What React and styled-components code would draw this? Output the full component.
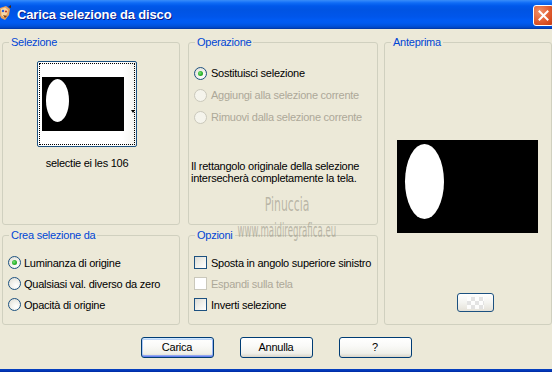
import React from "react";
import styled, { createGlobalStyle, css } from "styled-components";

const GlobalStyle = createGlobalStyle`
  html, body { margin: 0; padding: 0; background: #ECE9D8; }
  body { font-family: "Liberation Sans", Arial, sans-serif; font-size: 11px; color: #000; letter-spacing: -0.25px; }
  * { box-sizing: border-box; }
`;

const Window = styled.div`
  position: relative;
  width: 552px;
  height: 372px;
  background: #ECE9D8;
  display: flex;
  flex-direction: column;
  overflow: hidden;
`;

const TitleBar = styled.div`
  height: 29px;
  flex: none;
  display: flex;
  align-items: center;
  background: linear-gradient(to bottom, #3A8DF6 0px, #2A82FA 1px, #0E6BF5 3px, #0058EA 6px, #0054E3 10px, #0056EB 17px, #005BF3 20px, #005AF0 23px, #0051DA 26px, #0043C0 28px, #003298 29px);
  overflow: hidden;
`;

const AppIcon = styled.svg`
  width: 12px;
  height: 17px;
  margin-left: -1px;
  margin-top: -2px;
  flex: none;
`;

const Title = styled.div`
  margin-left: 6px;
  flex: 1;
  font-family: "Liberation Sans", Arial, sans-serif;
  font-weight: bold;
  font-size: 13px;
  color: #fff;
  text-shadow: 1px 1px 0 #0A1883;
  letter-spacing: -0.15px;
`;

const CloseButton = styled.div`
  width: 21px;
  height: 21px;
  margin-right: -2px;
  margin-top: 1px;
  flex: none;
  border: 1px solid #fff;
  border-radius: 3px;
  background: radial-gradient(circle at 30% 30%, #F0916A 0%, #E6693E 40%, #D2461A 80%, #C23A10 100%);
  display: flex;
  align-items: center;
  justify-content: center;
`;

const Body = styled.div`
  flex: 1;
  display: flex;
  flex-direction: column;
  padding-top: 6px;
`;

const Groups = styled.div`
  display: grid;
  grid-template-columns: 178px 192px 168px;
  grid-template-rows: 190px 97px;
  column-gap: 6px;
  row-gap: 3px;
  padding-left: 2px;
`;

const Group = styled.fieldset`
  margin: 0;
  margin-left: ${(p) => p.$shift || 0}px;
  padding: 0 0 0 ${(p) => p.$pad || 0}px;
  border: 1px solid #D0D0BF;
  border-radius: 3px;
  min-width: 0;
  grid-column: ${(p) => p.$col};
  grid-row: ${(p) => p.$row};
  display: flex;
  flex-direction: column;
  align-items: ${(p) => (p.$center ? "center" : "stretch")};
`;

const Legend = styled.legend`
  color: #0046D5;
  font-size: 11px;
  line-height: 14px;
  padding: 0 2px;
  margin-left: ${(p) => 6 - (p.$pad || 0)}px;
`;

/* Selezione */
const ThumbBox = styled.div`
  margin-top: 12px;
  margin-right: 8px;
  width: 100px;
  height: 86px;
  border: 1px solid #1C5180;
  border-radius: 2px;
  background: linear-gradient(to right, #FFFFFF 0%, #FFFFFF 86%, #F2F2EE 100%);
  outline: 1px dotted #000;
  outline-offset: -3px;
  display: flex;
  align-items: flex-start;
  padding: 15px 0 0 4px;
`;

const DropArrow = styled.div`
  align-self: center;
  margin-left: 7px;
  margin-top: -1px;
  width: 0;
  height: 0;
  border-left: 2.5px solid transparent;
  border-right: 2.5px solid transparent;
  border-top: 3px solid #000;
`;

const Caption = styled.div`
  margin-top: 10px;
  margin-right: 8px;
  line-height: 13px;
`;

/* Radios & checks */
const OptionList = styled.div`
  display: flex;
  flex-direction: column;
  margin-top: ${(p) => p.$top}px;
`;

const OptionRow = styled.div`
  height: ${(p) => p.$h}px;
  display: flex;
  align-items: center;
  gap: ${(p) => p.$gap}px;
  color: ${(p) => (p.$disabled ? "#ACA899" : "#000")};
  white-space: nowrap;
`;

const Radio = styled.span`
  flex: none;
  width: 13px;
  height: 13px;
  border-radius: 50%;
  display: flex;
  align-items: center;
  justify-content: center;
  ${(p) =>
    p.$disabled
      ? css`
          border: 1px solid #CAC8BB;
          background: #F5F4EC;
        `
      : css`
          border: 1px solid #1C5180;
          background: radial-gradient(circle at 65% 70%, #FFFFFF 0%, #F4F3EE 40%, #DCDBD2 100%);
        `}
  &::after {
    content: "";
    display: ${(p) => (p.$checked ? "block" : "none")};
    width: 5px;
    height: 5px;
    border-radius: 50%;
    background: radial-gradient(circle at 40% 40%, #7BE37B 0%, #2DB52D 50%, #1D8E1D 100%);
  }
`;

const Check = styled.span`
  flex: none;
  width: 13px;
  height: 13px;
  ${(p) =>
    p.$disabled
      ? css`
          border: 1px solid #CAC8BB;
          background: #FFFFFF;
        `
      : css`
          border: 1px solid #1C5180;
          background: linear-gradient(135deg, #DCDCD7 0%, #F0F0EA 50%, #FFFFFF 100%);
        `}
`;

const Note = styled.p`
  margin: 32px 0 0 -3px;
  line-height: 12px;
`;

/* Anteprima */
const Preview = styled.div`
  margin-top: 91px;
  margin-left: -2px;
  width: 141px;
  height: 93px;
  background: #000;
  display: flex;
`;

const SwatchButton = styled.div`
  margin-top: 60px;
  margin-left: 14px;
  width: 37px;
  height: 19px;
  border: 1px solid #1C5180;
  border-radius: 3px;
  background: linear-gradient(to bottom, #FFFFFF 0%, #F4F4F0 50%, #E4E1D8 100%);
  display: flex;
  align-items: center;
  justify-content: center;
`;

const Checker = styled.div`
  width: 17px;
  height: 12px;
  background-color: #FFFFFF;
  background-image: conic-gradient(#E2E2E2 25%, transparent 0 50%, #E2E2E2 0 75%, transparent 0);
  background-size: 8px 8px;
  opacity: 0.9;
`;

/* Buttons */
const ButtonRow = styled.div`
  display: flex;
  justify-content: center;
  gap: 26px;
  margin-top: 12px;
`;

const Button = styled.div`
  width: 73px;
  height: 21px;
  border: 1px solid #003C74;
  border-radius: 3px;
  background: linear-gradient(to bottom, #FFFFFF 0%, #FAFAF8 40%, #F0F0EA 80%, #D8D4C8 100%);
  display: flex;
  align-items: center;
  justify-content: center;
  line-height: 13px;
  ${(p) =>
    p.$default &&
    css`
      box-shadow: inset 0 -1px 0 #6982EE, inset 0 1px 0 #CEE7FF, inset 1px 0 0 #ADC8F7, inset -1px 0 0 #98B4F5,
        inset 0 -2px 0 #91A7F0, inset 0 2px 0 #BCD4F6;
    `}
`;

const BottomBorder = styled.div`
  margin-top: auto;
  height: 3px;
  background: linear-gradient(to bottom, #0842C0, #0036B8 60%, #002A9F);
`;

const Watermark = styled.div`
  position: absolute;
  left: 167px;
  top: 194px;
  width: 240px;
  display: flex;
  flex-direction: column;
  align-items: center;
  color: rgba(150, 146, 132, 0.6);
  font-family: "DejaVu Sans", sans-serif;
  letter-spacing: 0;
  pointer-events: none;
`;

const WmName = styled.div`
  font-size: 19px;
  line-height: 20px;
  transform: scaleX(0.57);
`;

const WmSite = styled.div`
  font-size: 20px;
  line-height: 22px;
  transform: scaleX(0.43);
  margin-top: 5px;
`;

const Ellipse = ({ w, h, left, top, width, height }) => (
  <svg width={w} height={h} viewBox={`0 0 ${w} ${h}`} style={{ display: "block", flex: "none" }}>
    <rect width={w} height={h} fill="#000" />
    <ellipse cx={left + width / 2} cy={top + height / 2} rx={width / 2} ry={height / 2} fill="#fff" />
  </svg>
);

const RadioOption = ({ label, checked, disabled, h, gap }) => (
  <OptionRow $disabled={disabled} $h={h} $gap={gap}>
    <Radio $checked={checked} $disabled={disabled} />
    {label}
  </OptionRow>
);

const CheckOption = ({ label, disabled, h, gap }) => (
  <OptionRow $disabled={disabled} $h={h} $gap={gap}>
    <Check $disabled={disabled} />
    {label}
  </OptionRow>
);

export default function App() {
  return (
    <>
      <GlobalStyle />
      <Window>
        <TitleBar>
          <AppIcon viewBox="0 0 12 17">
            <path d="M1 3 L7 1 L11 4 L10 10 L6 15 L2 13 L0 8 Z" fill="#E9A15B" />
            <path d="M2 4 L6 2.5 L9 5 L8 9 L5 12 L2.5 10.5 Z" fill="#F6D7A8" />
            <circle cx="4" cy="6" r="1.2" fill="#2B5FD9" />
            <circle cx="7" cy="6.5" r="1.1" fill="#C43A2A" />
            <path d="M4 10 L8 11 L6 13 Z" fill="#7A3E16" />
            <path d="M9 2 L12 0 L12 3 Z" fill="#4A2A10" />
          </AppIcon>
          <Title>Carica selezione da disco</Title>
          <CloseButton>
            <svg width="11" height="11" viewBox="0 0 11 11">
              <path d="M1.5 1.5 L9.5 9.5 M9.5 1.5 L1.5 9.5" stroke="#fff" strokeWidth="2" strokeLinecap="square" />
            </svg>
          </CloseButton>
        </TitleBar>
        <Body>
          <Groups>
            <Group $col="1" $row="1" $center>
              <Legend>Selezione</Legend>
              <ThumbBox>
                <Ellipse w={82} h={54} left={4} top={2} width={23} height={43} />
                <DropArrow />
              </ThumbBox>
              <Caption>selectie ei les 106</Caption>
            </Group>
            <Group $col="2" $row="1" $shift={2} $pad={5}>
              <Legend $pad={5}>Operazione</Legend>
              <OptionList $top={13}>
                <RadioOption label="Sostituisci selezione" checked h={22} gap={4} />
                <RadioOption label="Aggiungi alla selezione corrente" disabled h={22} gap={4} />
                <RadioOption label="Rimuovi dalla selezione corrente" disabled h={22} gap={4} />
              </OptionList>
              <Note>
                Il rettangolo originale della selezione
                <br />
                intersecherà completamente la tela.
              </Note>
            </Group>
            <Group $col="3" $row="1 / span 2" $center>
              <Legend>Anteprima</Legend>
              <Preview>
                <Ellipse w={141} h={93} left={8} top={4} width={39} height={75} />
              </Preview>
              <SwatchButton>
                <Checker />
              </SwatchButton>
            </Group>
            <Group $col="1" $row="2" $pad={5}>
              <Legend $pad={5}>Crea selezione da</Legend>
              <OptionList $top={10}>
                <RadioOption label="Luminanza di origine" checked h={21} gap={3} />
                <RadioOption label="Qualsiasi val. diverso da zero" h={21} gap={3} />
                <RadioOption label="Opacità di origine" h={21} gap={3} />
              </OptionList>
            </Group>
            <Group $col="2" $row="2" $shift={2} $pad={5}>
              <Legend $pad={5}>Opzioni</Legend>
              <OptionList $top={10}>
                <CheckOption label="Sposta in angolo superiore sinistro" h={21} gap={4} />
                <CheckOption label="Espandi sulla tela" disabled h={21} gap={4} />
                <CheckOption label="Inverti selezione" h={21} gap={4} />
              </OptionList>
            </Group>
          </Groups>
          <ButtonRow>
            <Button $default>Carica</Button>
            <Button>Annulla</Button>
            <Button>?</Button>
          </ButtonRow>
        </Body>
        <BottomBorder />
        <Watermark>
          <WmName>Pinuccia</WmName>
          <WmSite>www.maidiregrafica.eu</WmSite>
        </Watermark>
      </Window>
    </>
  );
}
